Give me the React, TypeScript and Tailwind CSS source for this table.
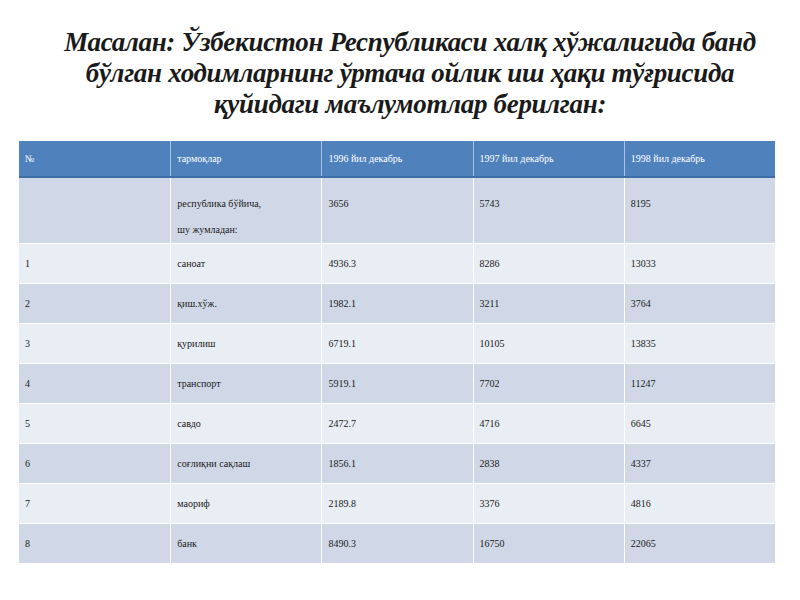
const rows = [
  ["1", "саноат", "4936.3", "8286", "13033"],
  ["2", "қиш.хўж.", "1982.1", "3211", "3764"],
  ["3", "қурилиш", "6719.1", "10105", "13835"],
  ["4", "транспорт", "5919.1", "7702", "11247"],
  ["5", "савдо", "2472.7", "4716", "6645"],
  ["6", "соғлиқни сақлаш", "1856.1", "2838", "4337"],
  ["7", "маориф", "2189.8", "3376", "4816"],
  ["8", "банк", "8490.3", "16750", "22065"],
];

const headers = ["№", "тармоқлар", "1996 йил декабрь", "1997 йил декабрь", "1998 йил декабрь"];

export default function App() {
  return (
    <div
      className="w-[800px] h-[600px] bg-white overflow-hidden"
      style={{ fontFamily: '"Liberation Serif", "DejaVu Serif", serif' }}
    >
      <h1 className="pt-[27px] pl-[20px] text-center text-[27px] leading-[31px] font-bold italic text-[#1a1a1a] tracking-[-0.3px]">
        Масалан: Ўзбекистон Республикаси халқ хўжалигида банд
        <br />
        бўлган ходимларнинг ўртача ойлик иш ҳақи тўғрисида
        <br />
        қуйидаги маълумотлар берилган:
      </h1>

      <div className="mt-[21px] ml-[19px] w-[756px] text-[10px] text-[#1a1a1a]">
        <div className="grid grid-cols-5 h-[37px] bg-[#4f81bd] border-b-2 border-[#3e6ea8] text-white">
          {headers.map((h, i) => (
            <div
              key={h}
              className={`flex items-center pl-[6px] ${i > 0 ? "border-l border-[#a9c3e6]" : ""}`}
            >
              {h}
            </div>
          ))}
        </div>

        <div className="grid grid-cols-5 h-[65px] bg-[#d0d8e8]">
          <div></div>
          <div className="border-l border-white pl-[6px] pt-[13px] leading-[26px]">
            республика бўйича,
            <br />
            шу жумладан:
          </div>
          <div className="border-l border-white pl-[6px] pt-[13px] leading-[26px]">3656</div>
          <div className="border-l border-white pl-[6px] pt-[13px] leading-[26px]">5743</div>
          <div className="border-l border-white pl-[6px] pt-[13px] leading-[26px]">8195</div>
        </div>

        {rows.map((r, ri) => (
          <div
            key={r[0]}
            className={`grid grid-cols-5 h-[40px] border-t border-white ${
              ri % 2 === 0 ? "bg-[#e9edf4]" : "bg-[#d0d8e8]"
            }`}
          >
            {r.map((c, ci) => (
              <div
                key={ci}
                className={`flex items-center pl-[6px] ${ci > 0 ? "border-l border-white" : ""}`}
              >
                {c}
              </div>
            ))}
          </div>
        ))}
      </div>
    </div>
  );
}
